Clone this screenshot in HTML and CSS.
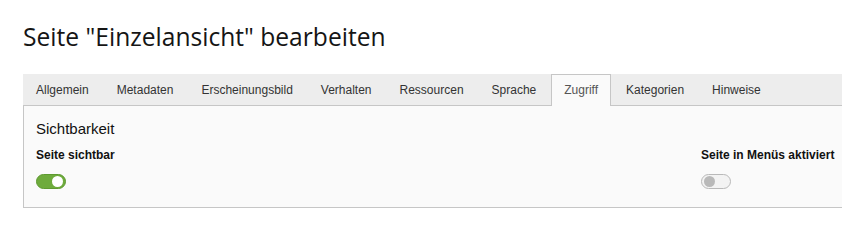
FILE: index.html
```html
<!DOCTYPE html>
<html lang="de">
<head>
<meta charset="utf-8">
<title>Seite bearbeiten</title>
<link rel="stylesheet" href="styles.css">
</head>
<body>
<div class="page">
  <h1 class="title">Seite "Einzelansicht" bearbeiten</h1>
  <ul class="tabs">
    <li class="tab">Allgemein</li>
    <li class="tab">Metadaten</li>
    <li class="tab">Erscheinungsbild</li>
    <li class="tab">Verhalten</li>
    <li class="tab">Ressourcen</li>
    <li class="tab">Sprache</li>
    <li class="tab active">Zugriff</li>
    <li class="tab">Kategorien</li>
    <li class="tab">Hinweise</li>
  </ul>
  <div class="panel">
    <h2 class="section-title">Sichtbarkeit</h2>
    <div class="fields">
      <div class="field">
        <div class="label">Seite sichtbar</div>
        <span class="toggle on"><span class="knob"></span></span>
      </div>
      <div class="field">
        <div class="label">Seite in Menüs aktiviert</div>
        <span class="toggle off"><span class="knob"></span></span>
      </div>
    </div>
  </div>
</div>
</body>
</html>
```
FILE: styles.css
```css
html, body {
  margin: 0;
  padding: 0;
  background: #ffffff;
}
.page {
  padding: 0 0 0 23px;
  font-family: "Liberation Sans", Arial, sans-serif;
}
.title {
  margin: 21px 0 21px;
  font-family: "Open Sans", sans-serif;
  font-weight: 400;
  font-size: 24.6px;
  line-height: 32px;
  color: #151515;
}
.tabs {
  display: flex;
  margin: 0;
  padding: 0;
  list-style: none;
  background: #ededed;
  border-bottom: 1px solid #c6c6c6;
}
.tab {
  padding: 8px 12px 9px;
  margin-right: 2px;
  margin-bottom: -1px;
  border: 1px solid transparent;
  border-bottom: 0;
  font-size: 12px;
  line-height: 14px;
  color: #333333;
}
.tab.active {
  background: #fafafa;
  border-color: #c6c6c6;
  color: #555555;
}
.panel {
  background: #fafafa;
  border-left: 1px solid #c6c6c6;
  border-bottom: 1px solid #c6c6c6;
  padding: 15px 0 18px 12px;
}
.section-title {
  margin: 0 0 11px;
  font-size: 15px;
  line-height: 16px;
  font-weight: 400;
  color: #111111;
}
.fields {
  display: grid;
  grid-template-columns: 665px auto;
}
.label {
  font-size: 12px;
  line-height: 14px;
  font-weight: 700;
  color: #111111;
  margin-bottom: 12px;
  white-space: nowrap;
}
.toggle {
  display: flex;
  align-items: center;
  box-sizing: border-box;
  width: 30px;
  height: 15px;
  border-radius: 8px;
  padding: 0 2px;
}
.toggle .knob {
  width: 11px;
  height: 11px;
  border-radius: 50%;
}
.toggle.on {
  background: #6eab3c;
  border: 1px solid #5e9a30;
  justify-content: flex-end;
}
.toggle.on .knob {
  background: #ffffff;
}
.toggle.off {
  background: #f3f3f3;
  border: 1px solid #b9b9b9;
  justify-content: flex-start;
}
.toggle.off .knob {
  background: #b9b9b9;
}
```
